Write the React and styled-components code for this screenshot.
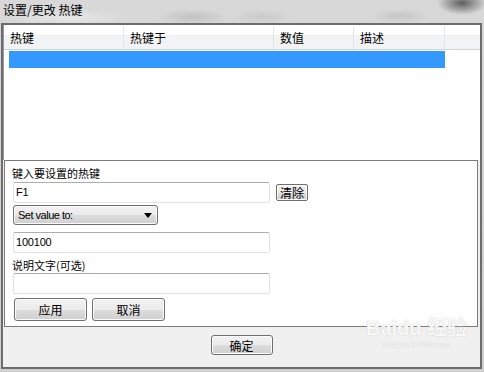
import React from "react";
import styled, { createGlobalStyle } from "styled-components";

const columns = [
  { title: "热键", width: 120 },
  { title: "热键于", width: 150 },
  { title: "数值", width: 80 },
  { title: "描述", width: 91 },
  { title: "", width: 0 }
];

const GlobalStyle = createGlobalStyle`
  html, body {
    margin: 0;
    padding: 0;
    background: #d6d6d6;
  }
  body {
    font-family: "Noto Sans CJK SC", "Liberation Sans", sans-serif;
    font-size: 12px;
    color: #000;
  }
`;

const cjk = `"Noto Sans CJK SC", "Liberation Sans", sans-serif`;
const latin = `"Liberation Sans", "Noto Sans CJK SC", sans-serif`;

const Page = styled.div`
  width: 484px;
  height: 372px;
  overflow: hidden;
  position: relative;
  background:
    radial-gradient(ellipse 25px 12px at 462px 3px, #5e5e5e, transparent),
    linear-gradient(#d8d8d8, #cfcfcf);
`;

const TopBar = styled.div`
  height: 23px;
  padding-left: 3px;
  display: flex;
  align-items: center;
  background:
    radial-gradient(ellipse 62px 10px at 68px 18px, #e6e6e6, transparent),
    radial-gradient(ellipse 36px 8px at 193px 17px, #c2c2c2, transparent),
    radial-gradient(ellipse 30px 7px at 262px 17px, #cacaca, transparent),
    radial-gradient(ellipse 30px 7px at 400px 16px, #c6c6c6, transparent);
`;

const Title = styled.span`
  font-family: ${cjk};
  font-size: 12px;
  line-height: 14px;
  margin-top: -4px;
`;

const Frame = styled.div`
  margin-left: 1px;
  width: 481px;
  height: 346px;
  box-sizing: border-box;
  border: 2px solid #6c6c6c;
  background: #f0f0f0;
  display: flex;
  flex-direction: column;
`;

const ListView = styled.div`
  height: 135px;
  background: #fff;
  padding-top: 2px;
  box-sizing: border-box;
  border-left: 1px solid #9a9a9a;
`;

const HeaderRow = styled.div`
  display: flex;
  height: 23px;
  box-sizing: border-box;
  border-bottom: 1px solid #d5d5d5;
  background: linear-gradient(#ffffff 0%, #ffffff 36%, #f2f3f5 37%, #f2f3f5 100%);
`;

const HeaderCell = styled.div`
  width: ${(p) => (p.$width ? `${p.$width}px` : "auto")};
  flex: ${(p) => (p.$width ? "none" : "1")};
  box-sizing: border-box;
  padding-left: 6px;
  border-right: ${(p) => (p.$width ? "1px solid #e2e3e5" : "none")};
  font-family: ${cjk};
  font-size: 12px;
  line-height: 22px;
`;

const SelectedRow = styled.div`
  margin: 1px 0 0 5px;
  width: 436px;
  height: 17px;
  background: #3399ff;
`;

const Panel = styled.div`
  height: 167px;
  margin: 0 2px 0 1px;
  box-sizing: border-box;
  border: 1px solid #7a7a7a;
  background: #fff;
  padding: 5px 0 0 8px;
  display: flex;
  flex-direction: column;
  align-items: flex-start;
`;

const Label = styled.div`
  margin-top: ${(p) => p.$top || 0}px;
  margin-left: -1px;
  font-family: ${cjk};
  font-size: 11px;
  line-height: 14px;
  height: 14px;
`;

const Row = styled.div`
  display: flex;
  align-items: center;
  gap: 6px;
  margin-top: ${(p) => p.$top || 0}px;
`;

const TextBox = styled.div`
  width: 257px;
  height: 21px;
  box-sizing: border-box;
  border: 1px solid #dfe3e8;
  border-top-color: #abadb3;
  border-radius: 2px;
  background: #fff;
  padding-left: 2px;
  margin-top: ${(p) => p.$top || 0}px;
  font-family: ${latin};
  font-size: 11px;
  line-height: 19px;
  letter-spacing: -0.2px;
`;

const winButton = `
  box-sizing: border-box;
  border: 1px solid #707070;
  border-radius: 3px;
  background: linear-gradient(#f2f2f2 0%, #ebebeb 50%, #dddddd 51%, #cfcfcf 100%);
  box-shadow: inset 0 0 0 1px #fbfbfb;
  display: flex;
  align-items: center;
  justify-content: center;
  font-family: ${cjk};
  font-size: 12px;
  color: #000;
`;

const Button = styled.div`
  ${winButton}
  width: ${(p) => p.$w}px;
  height: ${(p) => p.$h}px;
  border-radius: ${(p) => (p.$small ? 2 : 3)}px;
`;

const Select = styled.div`
  ${winButton}
  justify-content: space-between;
  width: 145px;
  height: 20px;
  margin-top: ${(p) => p.$top || 0}px;
  padding: 0 5px 0 4px;
  font-family: ${latin};
  font-size: 11px;
  letter-spacing: -0.5px;
`;

const Arrow = styled.span`
  width: 0;
  height: 0;
  border-left: 4px solid transparent;
  border-right: 4px solid transparent;
  border-top: 5px solid #000;
`;

const ButtonRow = styled.div`
  display: flex;
  gap: 5px;
  margin: 4px 0 0 1px;
`;

const Footer = styled.div`
  flex: 1;
  display: flex;
  justify-content: center;
  align-items: flex-start;
  padding-top: 8px;
  position: relative;
`;

const Watermark = styled.div`
  position: absolute;
  left: 363px;
  top: -10px;
  color: #f8f8f8;
  text-shadow: 0 0 1px #d2d2d2, 0 0 1px #d2d2d2;
  font-family: ${latin};
  display: flex;
  flex-direction: column;
  align-items: center;
  pointer-events: none;
`;

const MarkTop = styled.div`
  font-size: 20px;
  font-weight: bold;
  line-height: 22px;
`;

const MarkBottom = styled.div`
  font-family: "Liberation Serif", serif;
  font-size: 9px;
  line-height: 10px;
`;

export default function App() {
  return (
    <Page>
      <GlobalStyle />
      <TopBar>
        <Title>设置/更改 热键</Title>
      </TopBar>
      <Frame>
        <ListView>
          <HeaderRow>
            {columns.map((c, i) => (
              <HeaderCell key={i} $width={c.width}>
                {c.title}
              </HeaderCell>
            ))}
          </HeaderRow>
          <SelectedRow />
        </ListView>
        <Panel>
          <Label>键入要设置的热键</Label>
          <Row $top={2}>
            <TextBox>F1</TextBox>
            <Button $w={32} $h={17} $small>
              清除
            </Button>
          </Row>
          <Select $top={2}>
            <span>Set value to:</span>
            <Arrow />
          </Select>
          <TextBox $top={7}>100100</TextBox>
          <Label $top={5}>说明文字(可选)</Label>
          <TextBox $top={1} />
          <ButtonRow>
            <Button $w={73} $h={23}>应用</Button>
            <Button $w={73} $h={23}>取消</Button>
          </ButtonRow>
        </Panel>
        <Footer>
          <Button $w={62} $h={20}>确定</Button>
          <Watermark>
            <MarkTop>Baidu 经验</MarkTop>
            <MarkBottom>jingyan.baidu.com</MarkBottom>
          </Watermark>
        </Footer>
      </Frame>
    </Page>
  );
}
